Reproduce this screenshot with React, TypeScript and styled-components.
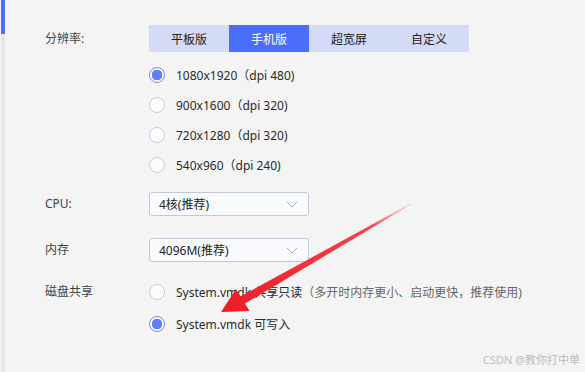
import * as React from "react";
import styled, { createGlobalStyle } from "styled-components";

const GlobalStyle = createGlobalStyle`
  html, body {
    margin: 0;
    padding: 0;
    background: #f4f4f4;
  }
  body {
    font-family: "Noto Sans", "Noto Sans CJK SC", sans-serif;
    font-size: 12px;
    color: #333;
  }
`;

const tabs = ["平板版", "手机版", "超宽屏", "自定义"];
const resolutions = [
  "1080x1920（dpi 480)",
  "900x1600（dpi 320)",
  "720x1280（dpi 320)",
  "540x960（dpi 240)",
];

const Radio: React.FC<{ checked?: boolean; children: React.ReactNode; height?: number }> = ({
  checked,
  children,
  height = 30,
}) => (
  <RadioRow $height={height}>
    <RadioDot $checked={!!checked} />
    <span>{children}</span>
  </RadioRow>
);

const Chevron = () => (
  <svg width="12" height="7" viewBox="0 0 12 7">
    <path d="M1 1l5 5 5-5" fill="none" stroke="#a9acb8" strokeWidth="1" />
  </svg>
);

export default function App() {
  return (
    <Page>
      <GlobalStyle />
      <SideRail />
      <Form>
        <Row>
          <Label>分辨率:</Label>
          <Tabs>
            {tabs.map((t, i) => (
              <Tab key={t} $active={i === 1}>
                {t}
              </Tab>
            ))}
          </Tabs>
        </Row>

        <Options $top={8}>
          {resolutions.map((r, i) => (
            <Radio key={r} checked={i === 0}>
              {r}
            </Radio>
          ))}
        </Options>

        <Row $top={12}>
          <Label>CPU:</Label>
          <Select>
            <span>4核(推荐)</span>
            <Chevron />
          </Select>
        </Row>

        <Row $top={22}>
          <Label>内存</Label>
          <Select>
            <span>4096M(推荐)</span>
            <Chevron />
          </Select>
        </Row>

        <Row $top={14} $alignTop>
          <Label $top={7}>磁盘共享</Label>
          <Options>
            <Radio height={32}>
              System.vmdk 共享只读<Hint>（多开时内存更小、启动更快，推荐使用)</Hint>
            </Radio>
            <Radio height={32} checked>
              System.vmdk 可写入
            </Radio>
          </Options>
        </Row>
      </Form>

      <Arrow width="585" height="372" viewBox="0 0 585 372">
        <defs>
          <linearGradient id="shaft" x1="411" y1="204" x2="222" y2="311" gradientUnits="userSpaceOnUse">
            <stop offset="0" stopColor="#ffb0b0" stopOpacity="0.5" />
            <stop offset="0.2" stopColor="#f6444a" />
            <stop offset="1" stopColor="#ee1c25" />
          </linearGradient>
        </defs>
        <polygon
          points="221,312 236,289 240.5,296.5 410.6,203.4 411,204.6 245,303.5 249.5,311"
          fill="url(#shaft)"
        />
      </Arrow>

      <Watermark>CSDN @教你打中单</Watermark>
    </Page>
  );
}

const Page = styled.main`
  position: relative;
  width: 585px;
  height: 372px;
  overflow: hidden;
  display: flex;
  background: #f4f4f4;
`;

const SideRail = styled.div`
  width: 4px;
  margin-left: 1px;
  flex-shrink: 0;
  background: linear-gradient(#4d6ef7 0 34px, #e6e6e8 34px);
`;

const Form = styled.div`
  display: flex;
  flex-direction: column;
  padding: 25px 0 0 40px;
`;

const Row = styled.div<{ $top?: number; $alignTop?: boolean }>`
  display: flex;
  align-items: ${({ $alignTop }) => ($alignTop ? "flex-start" : "center")};
  margin-top: ${({ $top }) => $top ?? 0}px;
`;

const Label = styled.div<{ $top?: number }>`
  width: 104px;
  flex-shrink: 0;
  color: #444;
  line-height: 18px;
  margin-top: ${({ $top }) => $top ?? 0}px;
`;

const Tabs = styled.div`
  display: flex;
`;

const Tab = styled.div<{ $active: boolean }>`
  width: 80px;
  height: 27px;
  display: flex;
  align-items: center;
  justify-content: center;
  background: ${({ $active }) => ($active ? "#4b6ef8" : "#d4dbf6")};
  color: ${({ $active }) => ($active ? "#fff" : "#222")};
`;

const Options = styled.div<{ $top?: number }>`
  display: flex;
  flex-direction: column;
  margin-top: ${({ $top }) => $top ?? 0}px;
  padding-left: ${({ $top }) => ($top !== undefined ? 104 : 0)}px;
`;

const RadioRow = styled.div<{ $height: number }>`
  height: ${({ $height }) => $height}px;
  display: flex;
  align-items: center;
  gap: 11px;
  color: #2b2b2b;
  white-space: nowrap;
`;

const RadioDot = styled.span<{ $checked: boolean }>`
  width: 16px;
  height: 16px;
  box-sizing: border-box;
  border-radius: 50%;
  flex-shrink: 0;
  border: 1px solid ${({ $checked }) => ($checked ? "#6f88f5" : "#c9ccdd")};
  background: ${({ $checked }) =>
    $checked
      ? "radial-gradient(circle, #5f7ff7 0 5px, #ffffff 5.5px)"
      : "#fcfcfe"};
`;

const Hint = styled.span`
  color: #666;
`;

const Select = styled.div`
  width: 160px;
  height: 24px;
  box-sizing: border-box;
  border: 1px solid #c3c7d9;
  border-radius: 3px;
  background: #f9fafe;
  display: flex;
  align-items: center;
  justify-content: space-between;
  padding: 0 10px 0 9px;
  color: #222;
`;

const Arrow = styled.svg`
  position: absolute;
  inset: 0;
  pointer-events: none;
`;

const Watermark = styled.div`
  position: absolute;
  right: 5px;
  bottom: 5px;
  color: #bdbdbd;
  font-size: 11px;
`;
